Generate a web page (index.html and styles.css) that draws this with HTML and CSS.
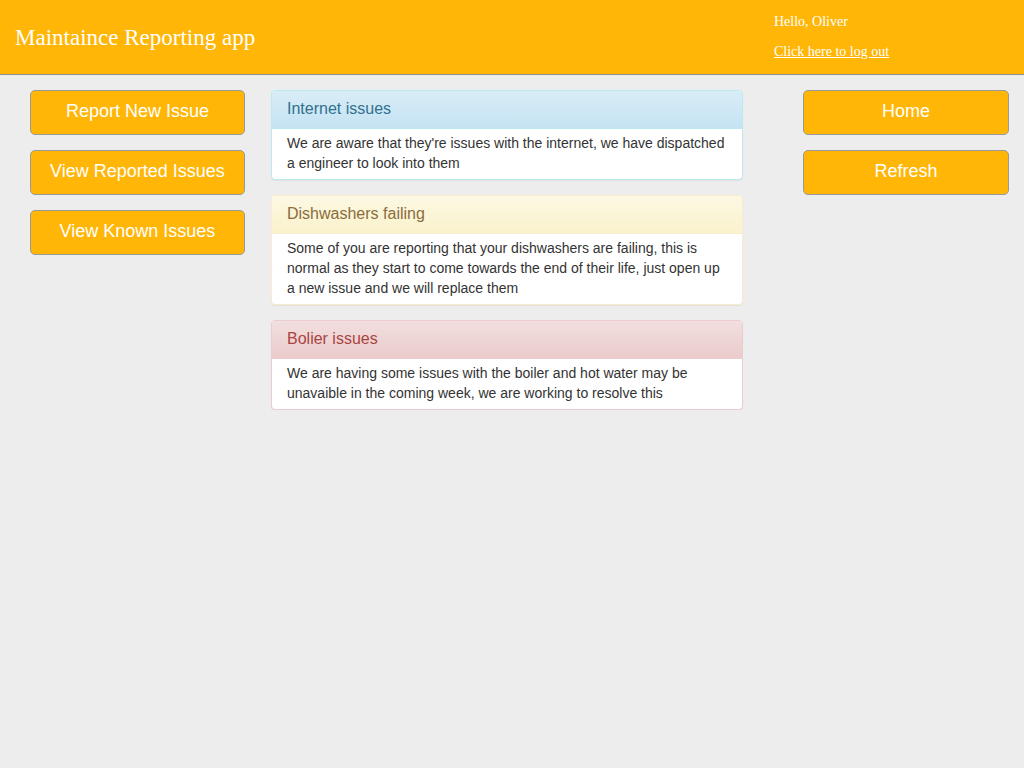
FILE: index.html
```html
<!DOCTYPE html>
<html lang="en">
<head>
<meta charset="utf-8">
<title>Maintaince Reporting app</title>
<link rel="stylesheet" href="styles.css">
</head>
<body>
<header class="topbar">
  <h1 class="app-title">Maintaince Reporting app</h1>
  <div class="user-box">
    <p class="greeting">Hello, Oliver</p>
    <a class="logout" href="#">Click here to log out</a>
  </div>
</header>
<main class="layout">
  <nav class="col-left">
    <button class="btn">Report New Issue</button>
    <button class="btn">View Reported Issues</button>
    <button class="btn">View Known Issues</button>
  </nav>
  <section class="col-center">
    <div class="panel panel-info">
      <div class="panel-heading">Internet issues</div>
      <div class="panel-body">We are aware that they're issues with the internet, we have dispatched a engineer to look into them</div>
    </div>
    <div class="panel panel-warning">
      <div class="panel-heading">Dishwashers failing</div>
      <div class="panel-body">Some of you are reporting that your dishwashers are failing, this is normal as they start to come towards the end of their life, just open up a new issue and we will replace them</div>
    </div>
    <div class="panel panel-danger">
      <div class="panel-heading">Bolier issues</div>
      <div class="panel-body">We are having some issues with the boiler and hot water may be unavaible in the coming week, we are working to resolve this</div>
    </div>
  </section>
  <nav class="col-right">
    <button class="btn">Home</button>
    <button class="btn">Refresh</button>
  </nav>
</main>
</body>
</html>
```

FILE: styles.css
```css
* { box-sizing: border-box; }
html, body {
  margin: 0;
  padding: 0;
  background: #ededed;
  min-height: 100%;
}
body {
  font-family: "Liberation Sans", Arial, sans-serif;
  color: #333;
}
.topbar {
  display: flex;
  justify-content: space-between;
  height: 75px;
  background: #ffb607;
  border-bottom: 1px solid #8f8f8f;
}
.app-title {
  margin: 0;
  padding: 24px 0 0 15px;
  font-family: "Liberation Serif", "Times New Roman", serif;
  font-weight: normal;
  font-size: 23px;
  line-height: 28px;
  color: #fff;
}
.user-box {
  width: 250px;
  padding-top: 13px;
  font-family: "Liberation Serif", "Times New Roman", serif;
  font-size: 14px;
  line-height: 18px;
  color: #fff;
}
.greeting {
  margin: 0 0 12px 0;
}
.logout {
  color: #fff;
  text-decoration: underline;
}
.layout {
  display: flex;
  align-items: flex-start;
  padding-top: 15px;
}
.col-left {
  display: flex;
  flex-direction: column;
  gap: 15px;
  width: 215px;
  margin-left: 30px;
}
.col-center {
  display: flex;
  flex-direction: column;
  gap: 15px;
  width: 472px;
  margin-left: 26px;
}
.col-right {
  display: flex;
  flex-direction: column;
  gap: 15px;
  width: 206px;
  margin-left: 60px;
}
.btn {
  display: block;
  width: 100%;
  height: 45px;
  padding: 0 0 4px;
  background: #ffb607;
  border: 1px solid #999;
  border-radius: 5px;
  color: #fff;
  font-family: "Liberation Sans", Arial, sans-serif;
  font-size: 18px;
  line-height: 40px;
  text-align: center;
  cursor: pointer;
}
.panel {
  background: #fff;
  border: 1px solid transparent;
  border-radius: 4px;
  box-shadow: 0 1px 1px rgba(0, 0, 0, 0.05);
  overflow: hidden;
}
.panel-heading {
  height: 38px;
  padding: 0 15px;
  font-size: 16px;
  line-height: 36px;
  border-bottom: 1px solid transparent;
}
.panel-body {
  padding: 4px 15px 6px;
  font-size: 14px;
  line-height: 20px;
  color: #333;
}
.panel-info { border-color: #bce8f1; }
.panel-info .panel-heading {
  color: #31708f;
  background: linear-gradient(#d9edf7, #c4e3f3);
  border-bottom-color: #bce8f1;
}
.panel-warning { border-color: #faebcc; }
.panel-warning .panel-heading {
  color: #8a6d3b;
  background: linear-gradient(#fcf8e3, #faf2cc);
  border-bottom-color: #faebcc;
}
.panel-danger { border-color: #ebccd1; }
.panel-danger .panel-heading {
  color: #a94442;
  background: linear-gradient(#f2dede, #ebcccc);
  border-bottom-color: #ebccd1;
}
```
